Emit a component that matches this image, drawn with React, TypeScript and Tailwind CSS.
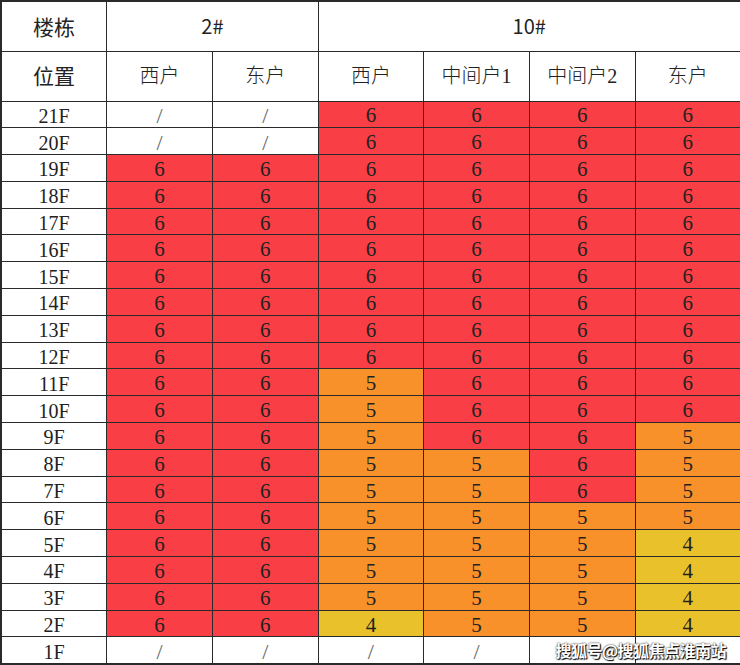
import React from 'react'

type Cell = string

const RED = 'bg-[#f93f45]'
const ORANGE = 'bg-[#f8912a]'
const YELLOW = 'bg-[#e9c12b]'

const rows: { floor: string; cells: Cell[] }[] = [
  { floor: '21F', cells: ['/', '/', '6', '6', '6', '6'] },
  { floor: '20F', cells: ['/', '/', '6', '6', '6', '6'] },
  { floor: '19F', cells: ['6', '6', '6', '6', '6', '6'] },
  { floor: '18F', cells: ['6', '6', '6', '6', '6', '6'] },
  { floor: '17F', cells: ['6', '6', '6', '6', '6', '6'] },
  { floor: '16F', cells: ['6', '6', '6', '6', '6', '6'] },
  { floor: '15F', cells: ['6', '6', '6', '6', '6', '6'] },
  { floor: '14F', cells: ['6', '6', '6', '6', '6', '6'] },
  { floor: '13F', cells: ['6', '6', '6', '6', '6', '6'] },
  { floor: '12F', cells: ['6', '6', '6', '6', '6', '6'] },
  { floor: '11F', cells: ['6', '6', '5', '6', '6', '6'] },
  { floor: '10F', cells: ['6', '6', '5', '6', '6', '6'] },
  { floor: '9F', cells: ['6', '6', '5', '6', '6', '5'] },
  { floor: '8F', cells: ['6', '6', '5', '5', '6', '5'] },
  { floor: '7F', cells: ['6', '6', '5', '5', '6', '5'] },
  { floor: '6F', cells: ['6', '6', '5', '5', '5', '5'] },
  { floor: '5F', cells: ['6', '6', '5', '5', '5', '4'] },
  { floor: '4F', cells: ['6', '6', '5', '5', '5', '4'] },
  { floor: '3F', cells: ['6', '6', '5', '5', '5', '4'] },
  { floor: '2F', cells: ['6', '6', '4', '5', '5', '4'] },
  { floor: '1F', cells: ['/', '/', '/', '/', '/', '/'] },
]

const fill = (v: Cell) => (v === '6' ? RED : v === '5' ? ORANGE : v === '4' ? YELLOW : 'bg-white')

const serif = "font-['Liberation_Serif','Noto_Sans_CJK_SC',serif]"
const sans = "font-['Noto_Sans_CJK_SC','Liberation_Sans',sans-serif]"

export default function App() {
  return (
    <div className="relative w-[740px] h-[665px] bg-[#dcdcdc]">
      <table className="w-[740px] table-fixed border-collapse border-2 border-[#2a2a2a] bg-white text-[#222]">
        <colgroup>
          {[0, 1, 2, 3, 4, 5, 6].map((i) => (
            <col key={i} className="w-[105.7px]" />
          ))}
        </colgroup>
        <tbody>
          <tr className="h-[50px]">
            <td className={`border border-[#2a2a2a] text-center text-[21px] ${sans}`}>楼栋</td>
            <td colSpan={2} className={`border border-[#2a2a2a] border-l-[#8c8c8c] text-center text-[20px] ${sans}`}>2#</td>
            <td colSpan={4} className={`border border-[#2a2a2a] border-l-[#8c8c8c] text-center text-[20px] ${sans}`}>10#</td>
          </tr>
          <tr className="h-[50px]">
            <td className={`border border-[#2a2a2a] text-center text-[21px] ${sans}`}>位置</td>
            {['西户', '东户', '西户', '中间户1', '中间户2', '东户'].map((h, i) => (
              <td
                key={i}
                className={`border border-[#2a2a2a] text-center text-[20px] font-light ${serif} ${i === 0 || i === 2 || i === 5 ? 'border-l-[#8c8c8c]' : ''}`}
              >
                {h}
              </td>
            ))}
          </tr>
          {rows.map((r) => (
            <tr key={r.floor} className="h-[26.8px]">
              <td className={`border border-[#2a2a2a] text-center text-[20px] leading-none pt-[3px] ${serif}`}>{r.floor}</td>
              {r.cells.map((c, i) => (
                <td
                  key={i}
                  className={`border border-[#2a2a2a] text-center leading-none pt-[3px] ${fill(c)} ${
                    c === '/' ? 'text-[22px] text-[#666]' : 'text-[21px]'
                  } ${serif} ${i === 0 || i === 2 || i === 5 ? 'border-l-[#8c8c8c]' : ''}`}
                >
                  {c}
                </td>
              ))}
            </tr>
          ))}
        </tbody>
      </table>
      <div
        className={`absolute right-[14px] top-[638px] text-[16px] font-bold text-white tracking-[-0.5px] ${sans} [text-shadow:0_0_2px_#000,1px_1px_1px_#000]`}
      >
        搜狐号@搜狐焦点淮南站
      </div>
    </div>
  )
}
